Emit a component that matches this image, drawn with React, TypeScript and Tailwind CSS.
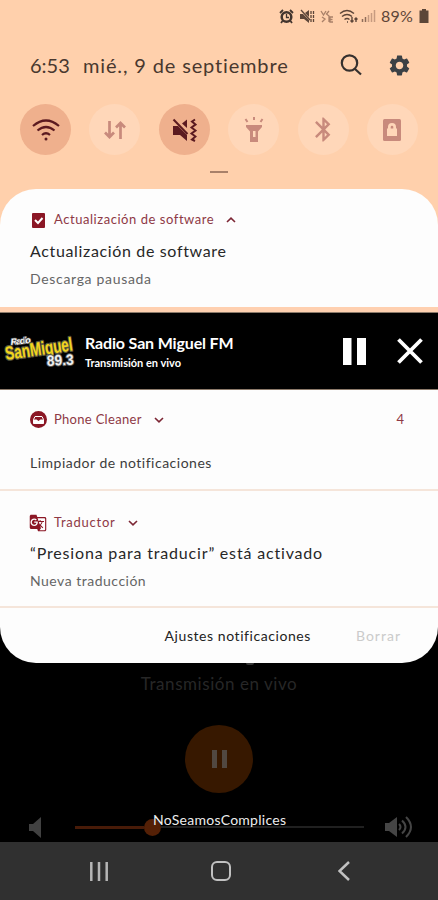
import type { ReactNode } from 'react';
import { MdBluetooth, MdSettings, MdGTranslate } from 'react-icons/md';

interface ToggleProps {
  active?: boolean;
  children: ReactNode;
}

function Toggle({ active, children }: ToggleProps) {
  return (
    <button
      className={`flex size-[51px] items-center justify-center rounded-full ${
        active ? 'bg-[#efb08d] text-[#5b1a20]' : 'bg-[#ffd7b9] text-[#c88a7c]'
      }`}
    >
      {children}
    </button>
  );
}

function Chevron({ up }: { up?: boolean }) {
  return (
    <svg width="10" height="6" viewBox="0 0 10 6" fill="none" stroke="#7c2634" strokeWidth="1.6">
      <path d={up ? 'M1 5l4-3.8L9 5' : 'M1 1l4 3.8L9 1'} />
    </svg>
  );
}

function MuteVibrate() {
  return (
    <svg width="25" height="24" viewBox="0 0 25 24" fill="currentColor">
      <path d="M1 8h5l9 9v6l-7-6H1z" />
      <path d="M10 5.500l5-4v8.500z" />
      <path d="M1.500 1.500l14 14.500" stroke="currentColor" strokeWidth="2" />
      <path d="M23 1.500l-3 2 3.500 3-4 3 4 3-4 3 4 3-3.500 3 3 1.500" fill="none" stroke="currentColor" strokeWidth="2" />
    </svg>
  );
}

function StatusBar() {
  return (
    <div className="flex h-8 items-center justify-end pr-[9px] text-[#5d4538]">
      <svg width="15" height="15" viewBox="0 0 15 15" fill="none" stroke="#42342d">
        <circle cx="7.500" cy="8" r="4.800" strokeWidth="2.500" />
        <path d="M7.500 5v3.500H10" strokeWidth="1.300" />
        <path d="M1 4l3-3M14 4l-3-3M3.500 12l-1.500 2M11.500 12l1.500 2" strokeWidth="1.800" />
      </svg>
      <svg className="ml-[6px]" width="15" height="15" viewBox="0 0 15 15" fill="currentColor">
        <path d="M0 5h3l6 6v3L4 10H0zM5 4l4-3v7z" />
        <path d="M1 1l9 10" stroke="currentColor" strokeWidth="1.3" />
        <path d="M11 2v11M13.500 2v11" stroke="currentColor" strokeWidth="1.3" strokeDasharray="3 1" />
      </svg>
      <svg className="ml-[5px]" width="14" height="15" viewBox="0 0 14 15" fill="none" stroke="#a98068" strokeWidth="1.3">
        <path d="M1 2l2.500 4L6 2M2 8l3 2-3 3M9 2L6.500 5l2.500 2v6M13 8h-3v5h3M10 10.500h2.500" />
      </svg>
      <svg className="ml-[5px]" width="20" height="15" viewBox="0 0 20 15" fill="none" stroke="currentColor" strokeWidth="1.4">
        <path d="M1 4.500q7-6 14 0M3 7.500q5-4 10 0M5.500 10.500q2.500-2 5 0" />
        <path d="M8 13h1M13 8v5M11.500 11.500L13 13l1.500-1.500M17 13V9M15.500 10.500L17 9l1.500 1.500" />
      </svg>
      <svg className="ml-[2px]" width="15" height="14" viewBox="0 0 15 14" fill="none" strokeWidth="1.5">
        <path d="M1.500 10v3M4.500 8v5" stroke="#8f6d5a" />
        <path d="M7.500 6v7M10.500 4v9M13.500 1v12" stroke="#c79b80" />
      </svg>
      <span className="ml-[5px] w-[34px] text-base tracking-[0.2px]">89%</span>
      <svg className="ml-[4px]" width="10" height="14" viewBox="0 0 10 14" fill="#5c4638">
        <path d="M3 0h4v1.500h2.500V14h-9V1.500H3z" />
      </svg>
    </div>
  );
}

function QuickSettings() {
  return (
    <header className="flex h-[189px] flex-col bg-[#ffd0ac]">
      <StatusBar />
      <div className="flex h-[66px] items-center pl-[30px] pr-[28px] text-[#49382f]">
        <span className="w-[53px] text-[20px]">6:53</span>
        <span className="whitespace-nowrap text-[20px] tracking-[0.85px]">mié., 9 de septiembre</span>
        <div className="ml-auto flex items-center gap-[25px]">
          <svg width="22" height="22" viewBox="0 0 22 22" fill="none" stroke="#36302e" strokeWidth="2.200">
            <circle cx="9.500" cy="9" r="7.700" />
            <path d="M15 15l6 5.500" />
          </svg>
          <MdSettings size={25} className="-mr-[2px] text-[#3b4045]" />
        </div>
      </div>
      <div className="mt-[6px] flex justify-between pl-5 pr-[20px]">
        <Toggle active>
          <svg width="28" height="24" viewBox="0 0 28 24" fill="none" stroke="currentColor" strokeWidth="2.200">
            <path d="M1 8Q14-3 27 8M5.500 12.500q8.500-7 17 0M10 17q4-3.500 8 0" />
            <circle cx="14" cy="21" r="1.500" fill="currentColor" stroke="none" />
          </svg>
        </Toggle>
        <Toggle>
          <svg width="22" height="20" viewBox="0 0 22 20" fill="none" stroke="currentColor" strokeWidth="2.700">
            <path d="M5.500 1v16M1 12.500L5.500 17l4.500-4.500M16.500 19V3M12 7.500L16.500 3 21 7.500" />
          </svg>
        </Toggle>
        <Toggle active>
          <MuteVibrate />
        </Toggle>
        <Toggle>
          <svg width="20" height="26" viewBox="0 0 20 26" fill="currentColor">
            <path d="M2 8h16v2l-4 4.500V25H6V14.500L2 10z" />
            <path d="M9 14h2.500v6H9z" fill="#ffd7b9" />
            <path d="M1.500 2l2 3M10 0v3M18.500 2l-2 3" stroke="currentColor" strokeWidth="2" />
          </svg>
        </Toggle>
        <Toggle>
          <MdBluetooth size={29} />
        </Toggle>
        <Toggle>
          <svg width="18" height="22" viewBox="0 0 18 22" fill="currentColor">
            <rect width="18" height="22" rx="1.500" />
            <path d="M4 9.500h1V8a4 4 0 018 0v1.500h1V17H4z" fill="#ffd7b9" />
            <path d="M7.700 9.500V8a1.300 1.300 0 012.600 0v1.500z" />
          </svg>
        </Toggle>
      </div>
      <div className="mx-auto mt-4 h-[2px] w-[18px] bg-[#a88069]" />
    </header>
  );
}

function RadioLogo() {
  return (
    <svg className="overflow-visible" width="74" height="46" viewBox="0 0 74 46" fontFamily="Liberation Sans, sans-serif" fontWeight="bold" strokeLinejoin="round" paintOrder="stroke">
      <text x="8" y="17" fontSize="9" fill="#fff" stroke="#555" strokeWidth="1.500" textLength="20" fontStyle="italic" transform="rotate(-6 8 17)">Radio</text>
      <text x="3" y="32" fontSize="19" fill="#f3d51d" stroke="#57553c" strokeWidth="2.500" textLength="68" lengthAdjust="spacingAndGlyphs" transform="rotate(-8 3 32)">SanMiguel</text>
      <text x="44" y="38" fontSize="15" fill="#eee" stroke="#555" strokeWidth="2" textLength="27" lengthAdjust="spacingAndGlyphs" transform="rotate(-3 44 38)">89.3</text>
    </svg>
  );
}

function RadioPlayer() {
  return (
    <section className="flex h-[83px] flex-col border-t-[5px] border-[#ffd0b0]">
      <div className="flex h-[78px] items-center border-y border-[#8c7a6a] bg-black pl-[3px] pr-[15px] text-white">
        <RadioLogo />
        <div className="ml-[8px] mt-[2px] flex flex-col">
          <span className="whitespace-nowrap text-[16px] font-bold leading-[21px] tracking-[-0.15px]">Radio San Miguel FM</span>
          <span className="whitespace-nowrap text-[11px] font-bold leading-[19px]">Transmisión en vivo</span>
        </div>
        <svg className="ml-auto" width="24" height="27" viewBox="0 0 24 27" fill="#fff">
          <path d="M1 0h8.500v27H1zM15 0h9v27h-9z" />
        </svg>
        <svg className="ml-[31px]" width="26" height="26" viewBox="0 0 26 26" stroke="#fff" strokeWidth="3.800">
          <path d="M1.500 1.500l23 23M24.500 1.500l-23 23" />
        </svg>
      </div>
    </section>
  );
}

function App() {
  return (
    <div className="h-[900px] w-[438px] overflow-hidden bg-black font-['Lato','Open_Sans',sans-serif]">
      <QuickSettings />

      <div className="bg-[linear-gradient(#ffd0ac_50%,#000_50%)]">
        <main className="h-[474px] overflow-hidden rounded-[36px] bg-[#fdfdfd]">
          <section className="h-[118px] pl-[30px] pt-[21px]">
            <div className="flex h-5 items-center text-[#8e3945]">
              <svg className="ml-[2px]" width="13" height="15" viewBox="0 0 13 15">
                <rect width="13" height="15" rx="1" fill="#8b1725" />
                <path d="M3 7l3 3 4.500-5" fill="none" stroke="#fff" strokeWidth="2" />
              </svg>
              <span className="ml-[9px] mr-3 whitespace-nowrap text-[13px] tracking-[0.55px]">Actualización de software</span>
              <Chevron up />
            </div>
            <p className="mt-[9px] whitespace-nowrap text-[16px] leading-6 tracking-[0.65px] text-[#272727]">Actualización de software</p>
            <p className="mt-[6px] text-[14px] leading-5 tracking-[0.68px] text-[#656565]">Descarga pausada</p>
          </section>

          <RadioPlayer />

          <section className="h-[101px] border-b-2 border-[#f5e5da] pl-[30px] pt-[20px]">
            <div className="flex h-5 items-center pr-[34px] text-[#8e3945]">
              <svg className="-mt-px" width="17" height="17" viewBox="0 0 17 17">
                <circle cx="8.500" cy="8.500" r="8.500" fill="#8b1725" />
                <path d="M3.500 8.500l1.500-3h7l1.500 3v4h-10z" fill="none" stroke="#fff" strokeWidth="1" />
                <path d="M3.500 8.500h3l2 1.500 2-1.500h3v4h-10z" fill="#fff" />
              </svg>
              <span className="ml-[7px] mr-3 whitespace-nowrap text-[13px] tracking-[0.3px]">Phone Cleaner</span>
              <Chevron />
              <span className="ml-auto text-[13px]">4</span>
            </div>
            <p className="mt-[21px] text-[14px] leading-6 tracking-[0.5px] text-[#3c3c3c]">Limpiador de notificaciones</p>
          </section>

          <section className="h-[117px] border-b-2 border-[#f5e5da] pl-[30px] pt-[22px]">
            <div className="flex h-5 items-center text-[#8e3945]">
              <MdGTranslate size={18} className="-ml-px -mt-px text-[#8b1725]" />
              <span className="ml-[7px] mr-3 whitespace-nowrap text-[13px] tracking-[0.75px]">Traductor</span>
              <Chevron />
            </div>
            <p className="mt-[8px] whitespace-nowrap text-[16px] leading-6 tracking-[0.83px] text-[#272727]">“Presiona para traducir” está activado</p>
            <p className="mt-[6px] text-[14px] leading-5 tracking-[0.5px] text-[#656565]">Nueva traducción</p>
          </section>

          <div className="flex h-[54px] items-center justify-end gap-[45px] pr-[37px] text-[14px]">
            <button className="whitespace-nowrap tracking-[0.57px] text-[#222]">Ajustes notificaciones</button>
            <button className="tracking-[1px] text-[#cbcbcb]">Borrar</button>
          </div>
        </main>
      </div>

      <section className="flex h-[179px] flex-col items-center">
        <div className="ml-[62px] h-[4px] w-2 rounded-b-full border-b-2 border-[#363636]" />
        <p className="mt-[7px] whitespace-nowrap text-[17px] leading-6 tracking-[0.55px] text-[#272727]">Transmisión en vivo</p>
        <button className="mt-[29px] flex size-[68px] shrink-0 items-center justify-center gap-[5px] rounded-full bg-[#371800]">
          <span className="h-[18px] w-[5px] bg-[#514841]" />
          <span className="h-[18px] w-[5px] bg-[#514841]" />
        </button>
        <div className="relative mt-[16px] flex h-[36px] w-full shrink-0 items-center pl-[29px] pr-[25px]">
          <svg width="13" height="21" viewBox="0 0 13 21" fill="#414141">
            <path d="M0 7h4l8-7v21l-8-7H0z" />
          </svg>
          <div className="ml-[33px] flex w-[289px] items-center">
            <div className="h-[3px] w-[69px] bg-[#481b08]" />
            <div className="size-[17px] rounded-full bg-[#542006]" />
            <div className="h-[2px] flex-1 bg-[#202020]" />
          </div>
          <svg className="ml-auto" width="28" height="22" viewBox="0 0 28 22" fill="none" stroke="#454545" strokeWidth="2">
            <path d="M0 7h4l8-6v20l-8-6H0z" fill="#454545" stroke="none" />
            <path d="M14 8q3 3 0 6M17 4.500q7 6.500 0 13M21 1q10 10 0 20" />
          </svg>
          <span className="absolute left-[153px] top-px text-[14px] leading-5 tracking-[0.27px] text-[#ededed]">NoSeamosComplices</span>
        </div>
      </section>

      <nav className="flex h-[58px] items-center bg-[#303030] pl-[90px]">
        <svg width="18" height="19" viewBox="0 0 18 19" stroke="#b5b5b5" strokeWidth="2.500">
          <path d="M1.300 0v19M9 0v19M16.700 0v19" />
        </svg>
        <div className="ml-[103px] size-[20px] rounded-[6px] border-[2.500px] border-[#c1c1c1]" />
        <svg className="ml-[107px]" width="12" height="20" viewBox="0 0 12 20" fill="none" stroke="#c1c1c1" strokeWidth="2.500">
          <path d="M11 1L1.500 10l9.500 9" />
        </svg>
      </nav>
    </div>
  );
}

export default App;
